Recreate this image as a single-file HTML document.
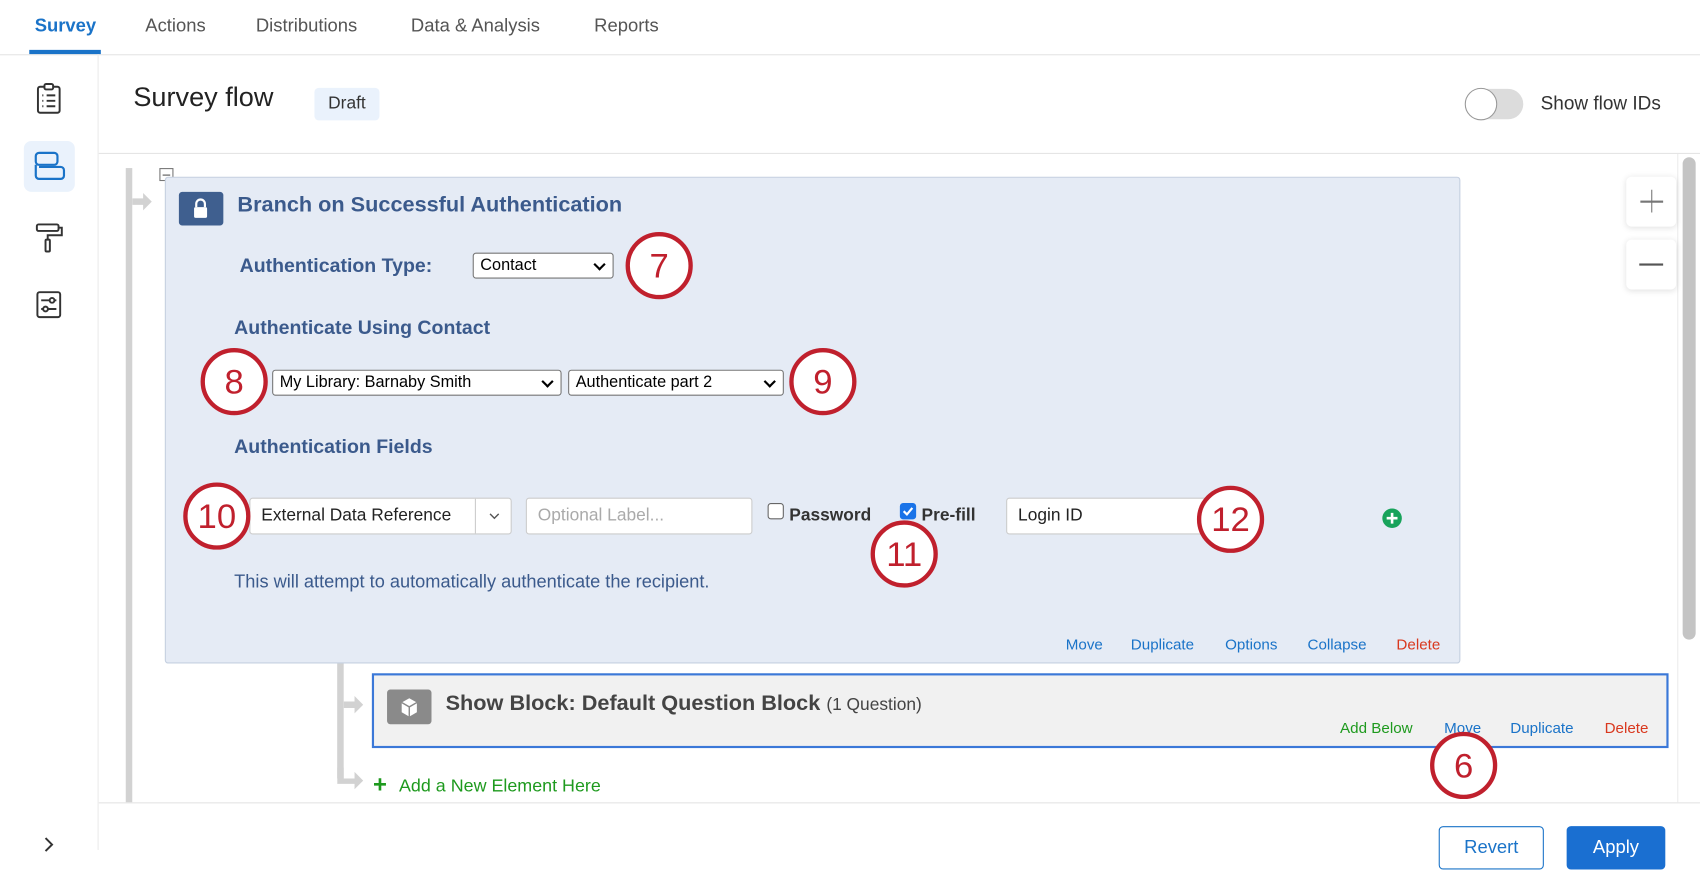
<!DOCTYPE html>
<html><head><meta charset="utf-8"><style>
*{box-sizing:border-box;margin:0;padding:0}
html,body{width:1700px;height:850px;overflow:hidden;background:#fff;font-family:"Liberation Sans",Arial,sans-serif}
#w{position:absolute;left:0;top:0;width:1568px;height:784px;transform:scale(1.08418);transform-origin:0 0}
.a{position:absolute;white-space:nowrap}
.tab{position:absolute;top:14px;font-size:17px;color:#555}
.circ{position:absolute;width:62px;height:62px;border:4px solid #c0202d;border-radius:50%;background:#fff;color:#c0202d;font-size:32px;text-align:center;line-height:54px}
.sel{position:absolute;height:24px;border:1px solid #767676;border-radius:3px;background:#fff;font-size:15px;color:#000;padding:2px 6px;line-height:18px}
.sel:after{content:"";position:absolute;right:8px;top:6px;width:6px;height:6px;border-right:2px solid #000;border-bottom:2px solid #000;transform:rotate(45deg)}
.lbl{position:absolute;color:#3b5a8c;font-weight:bold;font-size:18px}
.lnk{position:absolute;font-size:14px;color:#1a73c8}
.inp{position:absolute;background:#fff;border:1px solid #ccc;border-radius:3px;height:34px;font-size:16px;line-height:32px;padding-left:10px}
</style></head><body><div id="w">
<div class="tab" style="left:32px;color:#1a73c8;font-weight:bold">Survey</div>
<div style="position:absolute;left:27px;top:46px;width:66px;height:4px;background:#1a73c8"></div>
<div class="tab" style="left:134px">Actions</div>
<div class="tab" style="left:236px">Distributions</div>
<div class="tab" style="left:379px">Data &amp; Analysis</div>
<div class="tab" style="left:548px">Reports</div>
<div style="position:absolute;left:0;top:50px;width:1568px;height:1px;background:#e4e4e4"></div>
<div style="position:absolute;left:90px;top:50px;width:1px;height:734px;background:#ececec"></div>
<svg class="a" style="left:33px;top:76px" width="24" height="30" viewBox="0 0 24 30" fill="none" stroke="#333" stroke-width="1.8"><rect x="2" y="4" width="20" height="24" rx="2"/><rect x="8" y="1.5" width="8" height="5" rx="1.5" fill="#fff"/><path d="M6 12h1M10 12h8M6 17h1M10 17h8M6 22h1M10 22h8"/></svg>
<div style="position:absolute;left:22px;top:130px;width:47px;height:47px;border-radius:7px;background:#eaf2fc"></div>
<svg class="a" style="left:31px;top:139px" width="30" height="30" viewBox="0 0 30 30" fill="none" stroke="#1a73c8" stroke-width="2"><rect x="2" y="2" width="20" height="11" rx="3"/><path d="M2 13v10a3 3 0 0 0 3 3h20a3 3 0 0 0 3-3v-5a3 3 0 0 0-3-3H5"/></svg>
<svg class="a" style="left:32px;top:205px" width="28" height="30" viewBox="0 0 28 30" fill="none" stroke="#333" stroke-width="1.8"><rect x="2" y="2" width="20" height="6" rx="1.5"/><path d="M22 5h3v7H12v4"/><rect x="10" y="16" width="4" height="11" rx="1"/></svg>
<svg class="a" style="left:33px;top:268px" width="24" height="26" viewBox="0 0 24 26" fill="none" stroke="#333" stroke-width="1.8"><rect x="1.5" y="1.5" width="21" height="23" rx="2"/><path d="M5 9h14M5 17h14"/><circle cx="15" cy="9" r="2.2" fill="#fff"/><circle cx="9" cy="17" r="2.2" fill="#fff"/></svg>
<svg class="a" style="left:38px;top:772px" width="14" height="14" viewBox="0 0 14 14" fill="none" stroke="#333" stroke-width="1.8"><path d="M4 1l6 6-6 6"/></svg>
<div class="a" style="left:123px;top:76px;font-size:25px;color:#222">Survey flow</div>
<div class="a" style="left:290px;top:81px;width:60px;height:30px;background:#eaf2fc;border-radius:4px;font-size:16px;color:#333;text-align:center;line-height:30px">Draft</div>
<div class="a" style="left:1352px;top:82px;width:53px;height:28px;border-radius:14px;background:#dcdcdc"></div>
<div class="a" style="left:1351px;top:81px;width:30px;height:30px;border-radius:50%;background:#fff;border:1.5px solid #999"></div>
<div class="a" style="left:1421px;top:85px;font-size:17.5px;color:#333">Show flow IDs</div>
<div style="position:absolute;left:91px;top:141px;width:1477px;height:1px;background:#e4e4e4"></div>
<div style="position:absolute;left:1547px;top:142px;width:1px;height:598px;background:#ececec"></div>
<div style="position:absolute;left:1552px;top:145px;width:12px;height:445px;border-radius:6px;background:#c4c4c4"></div>
<div class="a" style="left:1500px;top:163px;width:46px;height:46px;background:#fff;border-radius:5px;box-shadow:0 1px 6px rgba(0,0,0,.12)"></div>
<div class="a" style="left:1513px;top:185px;width:21px;height:1.5px;background:#777"></div>
<div class="a" style="left:1522.75px;top:175px;width:1.5px;height:21px;background:#777"></div>
<div class="a" style="left:1500px;top:221px;width:46px;height:46px;background:#fff;border-radius:5px;box-shadow:0 1px 6px rgba(0,0,0,.12)"></div>
<div class="a" style="left:1512px;top:243px;width:22px;height:2px;background:#555"></div>
<div class="a" style="left:116px;top:155px;width:6px;height:585px;background:#d2d2d2"></div>
<svg class="a" style="left:122px;top:176px" width="20" height="20" viewBox="0 0 20 20"><path d="M0 7h10V2l8 8-8 8v-5H0z" fill="#d2d2d2"/></svg>
<div class="a" style="left:147px;top:155px;width:13px;height:12px;border:1px solid #777;background:#fff"></div>
<div class="a" style="left:150px;top:160.5px;width:7px;height:1px;background:#555"></div>
<div class="a" style="left:152px;top:163px;width:1195px;height:449px;background:#e5ebf5;border:1px solid #c5d0e0;border-radius:3px"></div>
<div class="a" style="left:165px;top:177px;width:41px;height:31px;background:#3f5f8f;border-radius:3px"></div>
<svg class="a" style="left:176px;top:181px" width="18" height="22" viewBox="0 0 18 22"><path d="M5 10V7a4 4 0 0 1 8 0v3" stroke="#fff" stroke-width="2" fill="none"/><rect x="3" y="10" width="12" height="10" rx="1.5" fill="#fff"/></svg>
<div class="a" style="left:219px;top:178px;font-size:20px;font-weight:bold;color:#3b5a8c">Branch on Successful Authentication</div>
<div class="lbl" style="left:221px;top:235px">Authentication Type:</div>
<div class="sel" style="left:436px;top:233px;width:130px">Contact</div>
<div class="lbl" style="left:216px;top:292px">Authenticate Using Contact</div>
<div class="sel" style="left:251px;top:341px;width:267px">My Library: Barnaby Smith</div>
<div class="sel" style="left:524px;top:341px;width:199px">Authenticate part 2</div>
<div class="lbl" style="left:216px;top:402px">Authentication Fields</div>
<div class="inp" style="left:230px;top:459px;width:242px;color:#222">External Data Reference</div>
<div class="a" style="left:438px;top:460px;width:1px;height:32px;background:#ccc"></div>
<svg class="a" style="left:450px;top:472px" width="12" height="8" viewBox="0 0 12 8"><path d="M2 2l4 4 4-4" stroke="#555" stroke-width="1.3" fill="none"/></svg>
<div class="inp" style="left:485px;top:459px;width:209px;color:#aaa">Optional Label...</div>
<div class="a" style="left:708px;top:464px;width:15px;height:15px;border:1px solid #666;border-radius:3px;background:#fff"></div>
<div class="a" style="left:728px;top:467px;font-size:16px;font-weight:bold;color:#333">Password</div>
<div class="a" style="left:830px;top:464px;width:15px;height:15px;border-radius:3px;background:#1a73e8"></div>
<svg class="a" style="left:831px;top:465px" width="13" height="13" viewBox="0 0 13 13"><path d="M2.5 6.5l3 3 5-6" stroke="#fff" stroke-width="2" fill="none"/></svg>
<div class="a" style="left:850px;top:467px;font-size:16px;font-weight:bold;color:#333">Pre-fill</div>
<div class="inp" style="left:928px;top:459px;width:190px;color:#222">Login ID</div>
<svg class="a" style="left:1274px;top:468px" width="20" height="20" viewBox="0 0 20 20"><circle cx="10" cy="10" r="9" fill="#18a35b"/><path d="M10 5v10M5 10h10" stroke="#fff" stroke-width="2.4"/></svg>
<div class="a" style="left:216px;top:527px;font-size:16.8px;color:#3b5a8c">This will attempt to automatically authenticate the recipient.</div>
<div class="lnk" style="left:983px;top:586px">Move</div>
<div class="lnk" style="left:1043px;top:586px">Duplicate</div>
<div class="lnk" style="left:1130px;top:586px">Options</div>
<div class="lnk" style="left:1206px;top:586px">Collapse</div>
<div class="lnk" style="left:1288px;top:586px;color:#d9381e">Delete</div>
<div class="a" style="left:311px;top:612px;width:6px;height:106px;background:#d2d2d2"></div>
<svg class="a" style="left:317px;top:640px" width="20" height="20" viewBox="0 0 20 20"><path d="M0 7h10V2l8 8-8 8v-5H0z" fill="#d2d2d2"/></svg>
<svg class="a" style="left:311px;top:708px" width="26" height="22" viewBox="0 0 26 22"><path d="M0 0h6v10h10V4l8 8-8 8v-5H0z" fill="#d2d2d2"/></svg>
<div class="a" style="left:343px;top:621px;width:1196px;height:69px;background:#f1f1f1;border:2px solid #3b78d8"></div>
<div class="a" style="left:357px;top:636px;width:41px;height:32px;background:#8a8a8a;border-radius:3px"></div>
<svg class="a" style="left:369px;top:643px" width="17" height="19" viewBox="0 0 17 19"><path d="M8.5 1l7 4v9l-7 4-7-4V5z" fill="#fff"/><path d="M1.5 5l7 4 7-4M8.5 9v9" stroke="#8a8a8a" stroke-width="1.3" fill="none"/></svg>
<div class="a" style="left:411px;top:638px;font-size:20px;font-weight:bold;color:#444">Show Block: Default Question Block <span style="font-weight:normal;font-size:16px">(1 Question)</span></div>
<div class="lnk" style="left:1236px;top:663px;color:#1e9a1e">Add Below</div>
<div class="lnk" style="left:1332px;top:663px">Move</div>
<div class="lnk" style="left:1393px;top:663px">Duplicate</div>
<div class="lnk" style="left:1480px;top:663px;color:#d9381e">Delete</div>
<div class="a" style="left:344px;top:713px;font-size:22px;font-weight:bold;color:#1e9a1e;line-height:22px">+</div>
<div class="a" style="left:368px;top:716px;font-size:16.5px;color:#1e9a1e">Add a New Element Here</div>
<div style="position:absolute;left:91px;top:740px;width:1477px;height:1px;background:#e4e4e4"></div>
<div class="a" style="left:1327px;top:762px;width:97px;height:40px;border:1.5px solid #1a73c8;border-radius:4px;color:#1a73c8;font-size:17px;text-align:center;line-height:38px">Revert</div>
<div class="a" style="left:1445px;top:762px;width:91px;height:40px;background:#1a6fd1;border-radius:4px;color:#fff;font-size:17px;text-align:center;line-height:40px">Apply</div>
<div class="circ" style="left:577px;top:214px">7</div>
<div class="circ" style="left:185px;top:321px">8</div>
<div class="circ" style="left:728px;top:321px">9</div>
<div class="circ" style="left:169px;top:445px">10</div>
<div class="circ" style="left:803px;top:480px">11</div>
<div class="circ" style="left:1104px;top:448px">12</div>
<div class="circ" style="left:1319px;top:675px">6</div>
</div></body></html>
